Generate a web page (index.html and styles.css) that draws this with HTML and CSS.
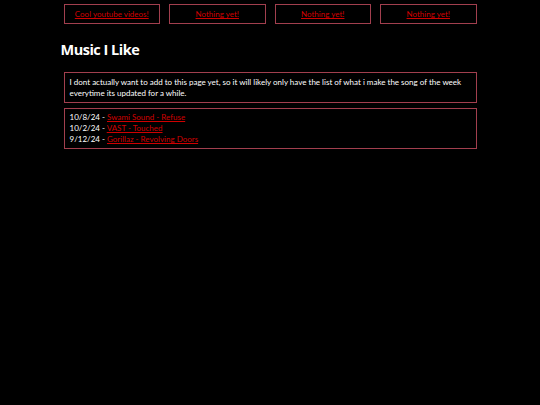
FILE: index.html
```html
<!DOCTYPE html>
<html>
<head>
<meta charset="utf-8">
<link rel="stylesheet" href="styles.css">
</head>
<body>
<div class="page">
  <nav class="nav">
    <a class="navbox" href="#">Cool youtube videos!</a>
    <a class="navbox" href="#">Nothing yet!</a>
    <a class="navbox" href="#">Nothing yet!</a>
    <a class="navbox" href="#">Nothing yet!</a>
  </nav>
  <h1 class="title">Music I Like</h1>
  <div class="box">I dont actually want to add to this page yet, so it will likely only have the list of what i make the song of the week everytime its updated for a while.</div>
  <div class="box list">
    <div>10/8/24 - <a href="#">Swami Sound - Refuse</a></div>
    <div>10/2/24 - <a href="#">VAST - Touched</a></div>
    <div>9/12/24 - <a href="#">Gorillaz - Revolving Doors</a></div>
  </div>
</div>
</body>
</html>
```
FILE: styles.css
```css
html, body {
  margin: 0;
  padding: 0;
  background: #000;
  color: #fff;
  font-family: Lato, "Open Sans", sans-serif;
  font-size: 8px;
}
.page {
  width: 413px;
  margin: 0 auto;
  padding-top: 4px;
}
.nav {
  display: grid;
  grid-template-columns: repeat(4, 1fr);
  gap: 9px;
}
.navbox {
  display: block;
  height: 18px;
  line-height: 18px;
  border: 1px solid #a23f4e;
  text-align: center;
  color: #d00000;
  text-decoration: underline;
}
.title {
  margin: 16px 0 0 -3px;
  font-family: "Open Sans", sans-serif;
  font-size: 14.5px;
  font-weight: bold;
  letter-spacing: -0.5px;
  line-height: 20px;
  height: 32px;
}
.box {
  border: 1px solid #a23f4e;
  padding: 4px 5px 3px 5px;
  line-height: 11px;
  margin-bottom: 5px;
}
.list {
  padding-top: 3px;
  padding-bottom: 3px;
}
a {
  color: #d00000;
}
```
